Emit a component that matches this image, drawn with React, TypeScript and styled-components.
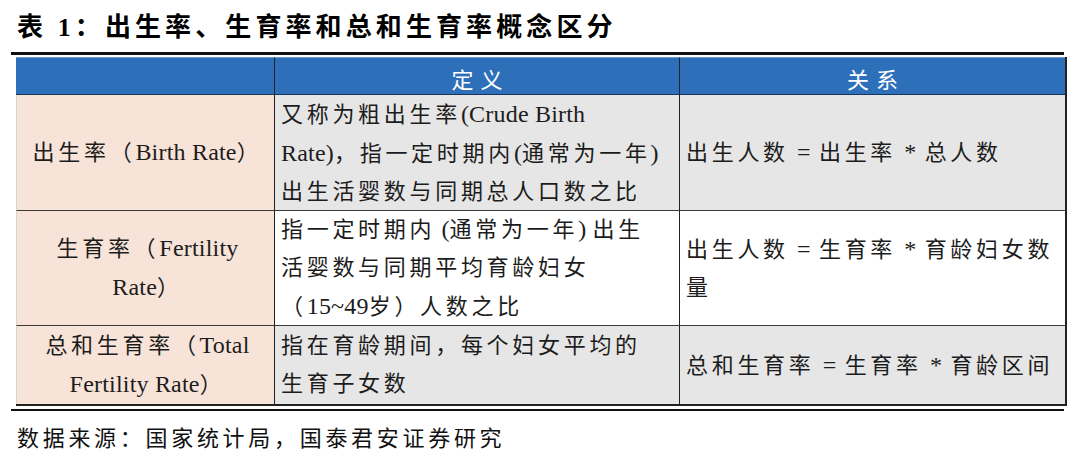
import styled, { createGlobalStyle } from 'styled-components';

const SERIF = `"Liberation Serif", "Noto Sans CJK SC", serif`;

const GlobalStyle = createGlobalStyle`
  html, body {
    margin: 0;
    padding: 0;
    background: #ffffff;
  }
  * {
    box-sizing: border-box;
  }
`;

const Page = styled.div`
  width: 1080px;
  height: 460px;
  display: flex;
  flex-direction: column;
  font-family: ${SERIF};
  color: #1c1c1c;
`;

const Title = styled.h1`
  margin: 0;
  padding: 12px 0 8px 17px;
  font-size: 26px;
  line-height: 32px;
  font-weight: 700;
  letter-spacing: 4.1px;
  color: #000;
  white-space: nowrap;
`;

const Rule = styled.div<{ $thick: number }>`
  margin-left: 11px;
  width: 1053px;
  height: ${p => p.$thick}px;
  background: #111;
`;

const Table = styled.div`
  margin: 2px 0 0 16px;
  width: fit-content;
  display: grid;
  grid-template-columns: 258px 405px 386px;
  grid-template-rows: 38px 116px 115px 78px;
  border-right: 2px solid #222;
  border-bottom: 2px solid #222;
  font-size: 22px;
  letter-spacing: 3.7px;
`;

// latin runs are set larger and tighter than the CJK text around them
const Lat = styled.span`
  font-size: 24px;
  letter-spacing: 0.2px;
`;

const Op = styled.span`
  margin: 0 2px;
`;

const HeadCell = styled.div<{ $first?: boolean }>`
  background: #2e6fba;
  border-top: 1px solid #6d9ad0;
  border-bottom: 1px solid #17365c;
  border-left: ${p => (p.$first ? 'none' : '1.5px solid #222')};
  color: #ffffff;
  display: flex;
  align-items: center;
  justify-content: center;
  padding: 3px 0 0 7px;
  letter-spacing: 7px;
`;

const Cell = styled.div<{ $bg: string; $center?: boolean; $first?: boolean; $last?: boolean }>`
  background: ${p => p.$bg};
  border-left: ${p => (p.$first ? '1px solid #d4d4d4' : '1.5px solid #222')};
  border-bottom: ${p => (p.$last ? 'none' : '1px solid #3a3a3a')};
  display: flex;
  flex-direction: column;
  justify-content: center;
  align-items: ${p => (p.$center ? 'center' : 'flex-start')};
  text-align: ${p => (p.$center ? 'center' : 'left')};
  padding: 0 2px 0 6px;
  line-height: 38px;
  white-space: nowrap;
`;

const Footer = styled.div`
  padding: 14px 0 0 17px;
  font-size: 22px;
  line-height: 28px;
  letter-spacing: 3.7px;
  color: #111;
`;

const PEACH = '#f8e3d8';
const GREY = '#e6e6e6';
const WHITE = '#ffffff';

const Formula = ({ parts }: { parts: string[] }) => (
  <span>
    {parts.map((p, i) =>
      i % 2 === 1 ? <Op key={i}><Lat>{` ${p} `}</Lat></Op> : <span key={i}>{p}</span>
    )}
  </span>
);

const App = () => (
  <Page>
    <GlobalStyle />
    <Title>表 1：出生率、生育率和总和生育率概念区分</Title>
    <Rule $thick={3} />
    <Table>
      <HeadCell $first />
      <HeadCell>定义</HeadCell>
      <HeadCell>关系</HeadCell>

      <Cell $bg={PEACH} $center $first>
        <span>出生率（<Lat>Birth Rate</Lat>）</span>
      </Cell>
      <Cell $bg={GREY}>
        <span>又称为粗出生率<Lat>(Crude Birth</Lat></span>
        <span><Lat>Rate)</Lat>，指一定时期内<Lat>(</Lat>通常为一年<Lat>)</Lat></span>
        <span>出生活婴数与同期总人口数之比</span>
      </Cell>
      <Cell $bg={GREY}>
        <Formula parts={['出生人数', '=', '出生率', '*', '总人数']} />
      </Cell>

      <Cell $bg={PEACH} $center $first>
        <span>生育率（<Lat>Fertility</Lat></span>
        <span><Lat>Rate</Lat>）</span>
      </Cell>
      <Cell $bg={WHITE}>
        <span>指一定时期内<Lat> (</Lat>通常为一年<Lat>) </Lat>出生</span>
        <span>活婴数与同期平均育龄妇女</span>
        <span>（<Lat>15~49</Lat>岁）人数之比</span>
      </Cell>
      <Cell $bg={WHITE}>
        <Formula parts={['出生人数', '=', '生育率', '*', '育龄妇女数']} />
        <span>量</span>
      </Cell>

      <Cell $bg={PEACH} $center $first $last>
        <span>总和生育率（<Lat>Total</Lat></span>
        <span><Lat>Fertility Rate</Lat>）</span>
      </Cell>
      <Cell $bg={GREY} $last>
        <span>指在育龄期间，每个妇女平均的</span>
        <span>生育子女数</span>
      </Cell>
      <Cell $bg={GREY} $last>
        <Formula parts={['总和生育率', '=', '生育率', '*', '育龄区间']} />
      </Cell>
    </Table>
    <Rule $thick={2} style={{ marginTop: 3 }} />
    <Footer>数据来源：国家统计局，国泰君安证券研究</Footer>
  </Page>
);

export default App;
